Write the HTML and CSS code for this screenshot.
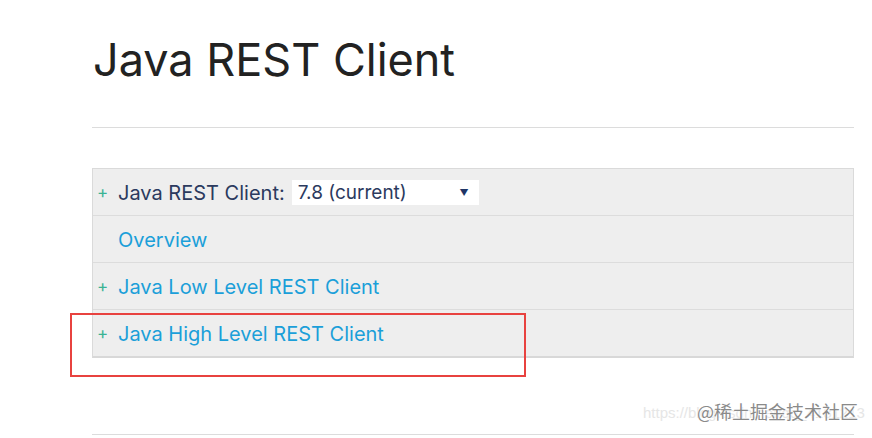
FILE: index.html
```html
<!DOCTYPE html>
<html>
<head>
<meta charset="utf-8">
<link rel="stylesheet" href="styles.css">
</head>
<body>
<div class="page">
  <h1 class="title">Java REST Client</h1>
  <hr class="rule">
  <div class="toc">
    <div class="row">
      <span class="plus">+</span>
      <span class="label">Java REST Client:</span>
      <span class="select"><span class="sel-text">7.8 (current)</span><span class="caret">▼</span></span>
    </div>
    <div class="row"><span class="plus blank"></span><a class="link">Overview</a></div>
    <div class="row"><span class="plus">+</span><a class="link">Java Low Level REST Client</a></div>
    <div class="row last"><span class="plus">+</span><a class="link">Java High Level REST Client</a></div>
  </div>
  <hr class="rule bottom">
</div>
<div class="highlight"></div>
<div class="watermark"><span class="url">https://blog.csdn.net/qq_4181213</span><span class="brand">@稀土掘金技术社区</span></div>
</body>
</html>
```
FILE: styles.css
```css
html, body { margin: 0; padding: 0; background: #fff; }
body { font-family: Inter, "Noto Sans", sans-serif; width: 872px; height: 438px; overflow: hidden; position: relative; }
.page { margin-left: 92px; width: 762px; padding-top: 30px; }
.title { margin: 0 0 0 1px; font-size: 45px; font-weight: 400; color: #222; line-height: 60px; letter-spacing: 0; }
.rule { margin: 37px 0 0; border: 0; border-top: 1px solid #dcdcdc; height: 0; }
.rule.bottom { margin-top: 76px; }
.toc { margin-top: 40px; background: #eeeeee; border: 1px solid #dadada; border-bottom: 2px solid #d8d8d8; }
.row { height: 46px; display: flex; align-items: center; border-bottom: 1px solid #dcdcdc; font-size: 20px; padding-top: 1px; box-sizing: border-box; height: 47px; }
.row.last { border-bottom: 0; height: 46px; }
.plus { width: 25px; padding-left: 4px; padding-bottom: 2px; color: #3ab394; font-size: 17px; flex: none; box-sizing: border-box; }
.plus.blank { height: 1px; }
.label { color: #2b3a5e; }
.link { color: #1b9fd9; }
.select { margin-left: 7px; width: 187px; height: 25px; background: #fff; display: flex; align-items: center; justify-content: space-between; padding: 0 10px 0 6px; box-sizing: border-box; color: #2b3a5e; font-size: 19px; }
.caret { font-size: 9px; color: #1f3566; }
.highlight { position: absolute; left: 70px; top: 313px; width: 452px; height: 60px; border: 2px solid #e8423f; }
.watermark { position: absolute; left: 640px; top: 398px; width: 232px; height: 26px; }
.url { position: absolute; left: 3px; top: 6px; font-family: "Liberation Sans", sans-serif; font-size: 15px; color: #e6e6e6; white-space: nowrap; }
.brand { position: absolute; left: 57px; top: 0px; font-family: "Noto Sans CJK SC", sans-serif; font-size: 18px; color: #8a8a8a; white-space: nowrap; text-shadow: 0 0 2px #fff, 0 0 2px #fff; }
```
